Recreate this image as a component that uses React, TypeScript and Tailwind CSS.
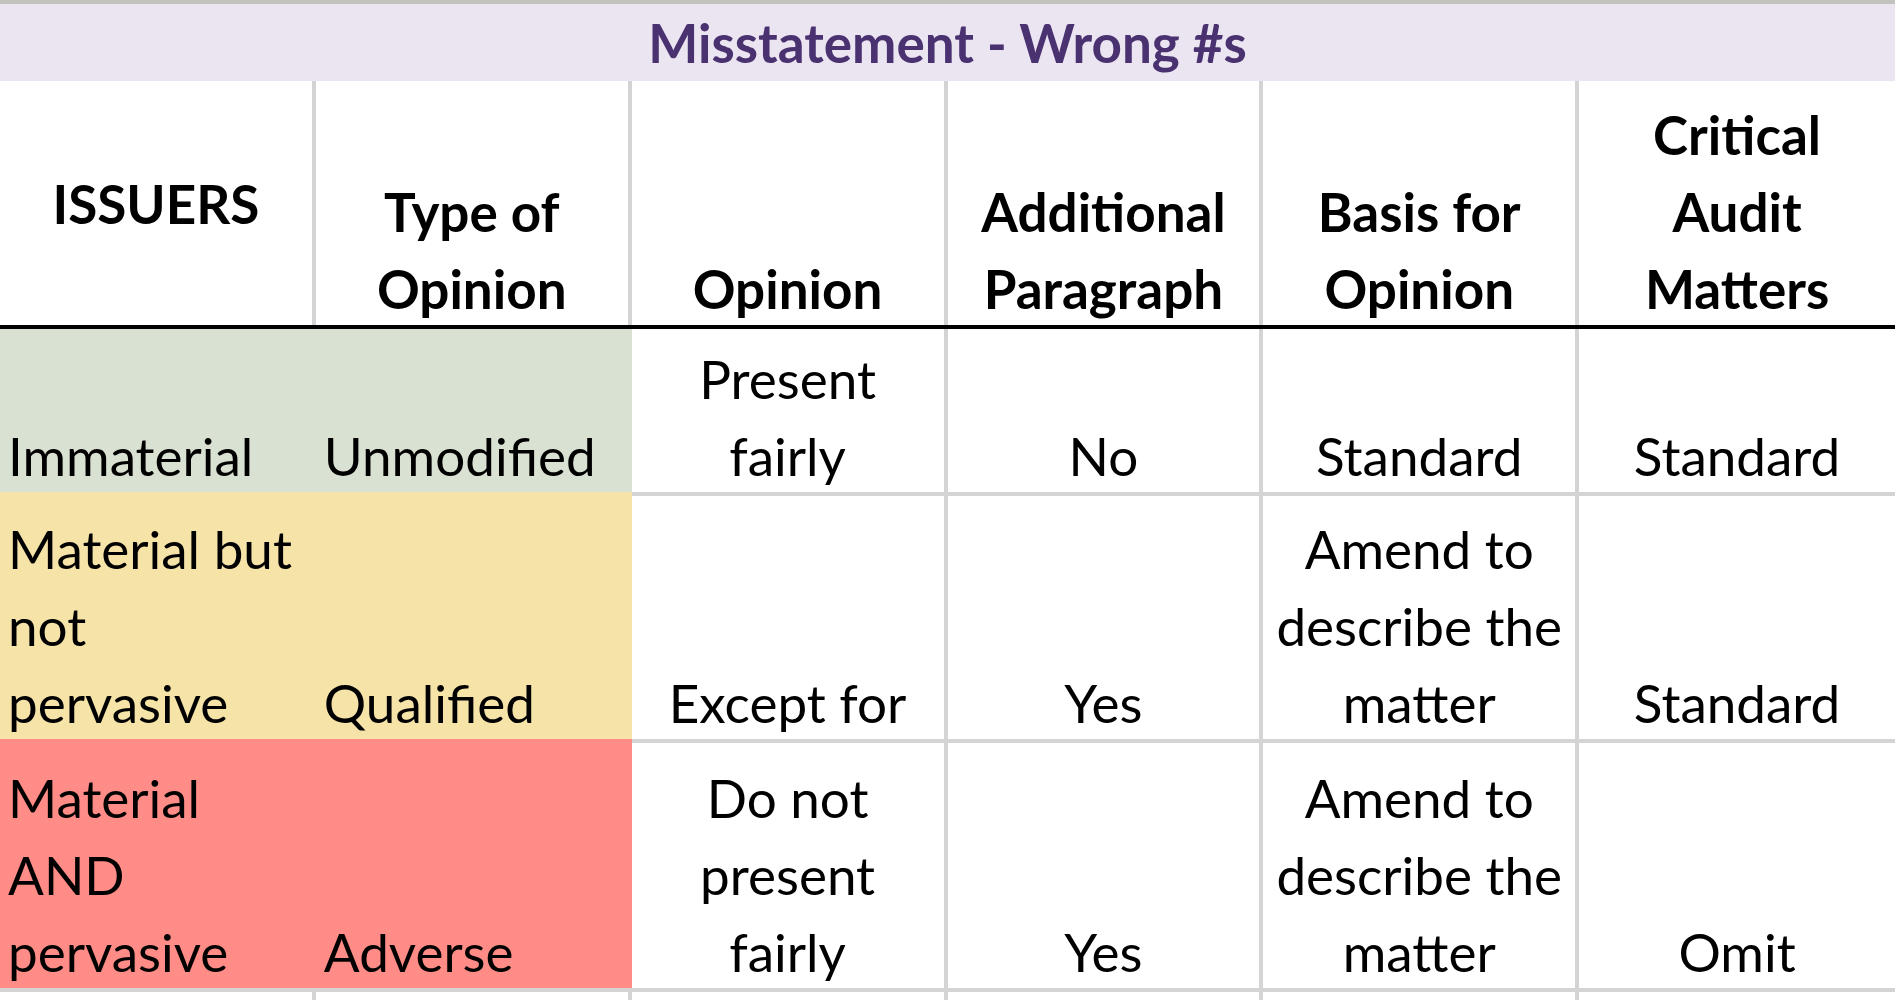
import React from "react";

type Fill = "white" | "green" | "yellow" | "red";

const fillCls: Record<Fill, string> = {
  white: "bg-white border-[#d4d4d4]",
  green: "bg-[#d9e1d2] border-[#d9e1d2]",
  yellow: "bg-[#f6e3a8] border-[#f6e3a8]",
  red: "bg-[#ff8c86] border-[#ff8c86]",
};

function Cell({
  lines,
  fill = "white",
  left = false,
  middle = false,
  bold = false,
  top = false,
  right = true,
}: {
  lines: string[];
  fill?: Fill;
  left?: boolean;
  middle?: boolean;
  bold?: boolean;
  top?: boolean;
  right?: boolean;
}) {
  return (
    <div
      className={[
        "flex flex-col min-w-0 overflow-hidden",
        fillCls[fill],
        top ? "border-t-4" : "",
        right ? "border-r-4" : "",
        middle ? "justify-center" : "justify-end",
        left ? "items-start pl-[8px]" : "items-center",
        bold ? "font-bold" : "font-normal",
      ].join(" ")}
    >
      {lines.map((l, i) => (
        <div
          key={i}
          className={
            middle
              ? "whitespace-nowrap text-[53px] leading-[77px] text-black"
              : "whitespace-nowrap text-[53px] leading-[77px] text-black translate-y-[2px]"
          }
        >
          {l}
        </div>
      ))}
    </div>
  );
}

export default function App() {
  return (
    <div className="w-full h-[1000px] overflow-hidden bg-white font-['Lato','Open_Sans',sans-serif]">
      <div className="h-[4px] bg-[#c2c2be]" />
      <div className="h-[77px] bg-[#ebe5f1] flex items-center justify-center">
        <span className="text-[53px] leading-[77px] font-bold text-[#4a3271] whitespace-nowrap">
          Misstatement - Wrong #s
        </span>
      </div>
      <div className="grid grid-cols-6 h-[248px] border-b-4 border-black">
        <Cell lines={["ISSUERS"]} bold middle />
        <Cell lines={["Type of", "Opinion"]} bold />
        <Cell lines={["Opinion"]} bold />
        <Cell lines={["Additional", "Paragraph"]} bold />
        <Cell lines={["Basis for", "Opinion"]} bold />
        <Cell lines={["Critical", "Audit", "Matters"]} bold right={false} />
      </div>
      <div className="grid grid-cols-6 h-[163px]">
        <Cell lines={["Immaterial"]} fill="green" left />
        <Cell lines={["Unmodified"]} fill="green" left />
        <Cell lines={["Present", "fairly"]} />
        <Cell lines={["No"]} />
        <Cell lines={["Standard"]} />
        <Cell lines={["Standard"]} right={false} />
      </div>
      <div className="grid grid-cols-6 h-[247px]">
        <Cell lines={["Material but", "not", "pervasive"]} fill="yellow" left top />
        <Cell lines={["Qualified"]} fill="yellow" left top />
        <Cell lines={["Except for"]} top />
        <Cell lines={["Yes"]} top />
        <Cell lines={["Amend to", "describe the", "matter"]} top />
        <Cell lines={["Standard"]} top right={false} />
      </div>
      <div className="grid grid-cols-6 h-[249px]">
        <Cell lines={["Material", "AND", "pervasive"]} fill="red" left top />
        <Cell lines={["Adverse"]} fill="red" left top />
        <Cell lines={["Do not", "present", "fairly"]} top />
        <Cell lines={["Yes"]} top />
        <Cell lines={["Amend to", "describe the", "matter"]} top />
        <Cell lines={["Omit"]} top right={false} />
      </div>
      <div className="grid grid-cols-6 h-[40px]">
        <Cell lines={[]} top />
        <Cell lines={[]} top />
        <Cell lines={[]} top />
        <Cell lines={[]} top />
        <Cell lines={[]} top />
        <Cell lines={[]} top right={false} />
      </div>
    </div>
  );
}
